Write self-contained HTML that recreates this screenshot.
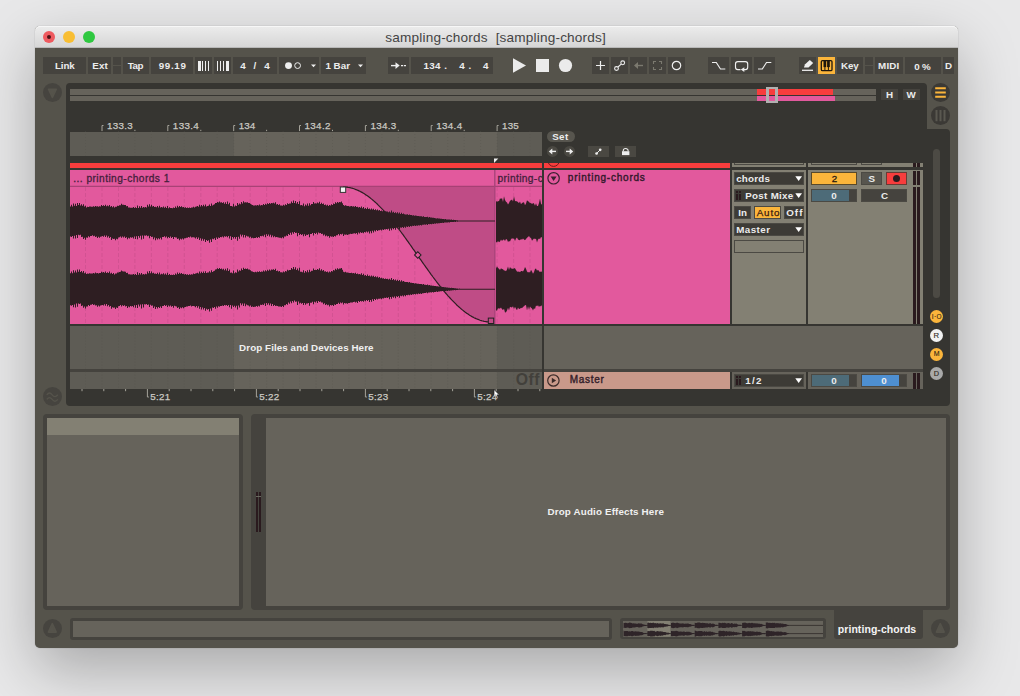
<!DOCTYPE html><html><head><meta charset="utf-8"><title>sampling-chords</title><style>
*{box-sizing:border-box;margin:0;padding:0}
html,body{width:1020px;height:696px;overflow:hidden}
body{background:#e8e8e9;font-family:"Liberation Sans",sans-serif;font-weight:bold;font-size:10px;color:#ececec;position:relative}
.a{position:absolute}
.t{position:absolute;white-space:pre;line-height:12px;height:12px}
#win{position:absolute;left:35px;top:26px;width:923px;height:622px;background:#55534b;border-radius:5px;box-shadow:0 22px 60px rgba(0,0,0,.28),0 0 1px rgba(0,0,0,.4)}
#title{position:absolute;left:0;top:0;width:923px;height:22px;background:linear-gradient(#ececec,#d6d6d6);border-radius:5px 5px 0 0;border-bottom:1px solid #b8b8b8;box-shadow:inset 0 1px 0 #f7f7f7}
.tl{position:absolute;top:5px;width:12px;height:12px;border-radius:50%}
.b{position:absolute;background:#45433e;height:17px;top:57px}
.dd{position:absolute;background:#3d3b36;border:1px solid #4b4943;height:13px}
.dd i{position:absolute;right:1px;top:3.500px;width:0;height:0;border-left:3.400px solid transparent;border-right:3.400px solid transparent;border-top:5px solid #fff}
.vb{position:absolute;height:13px;border:1px solid #4b4943}
.circ{position:absolute;width:19px;height:19px;border-radius:50%;background:#46443f}
.sc{position:absolute;width:13px;height:13px;border-radius:50%}
</style></head><body><div id="win"><div id="title"><div class="tl" style="left:8px;background:#ee5a5f"><div class="a" style="left:4px;top:4px;width:4px;height:4px;border-radius:50%;background:#4a1216"></div></div><div class="tl" style="left:28px;background:#f8be33"></div><div class="tl" style="left:48px;background:#2fc840"></div></div></div>
<div class="t" style="left:385.3px;top:30px;font-size:13.6px;line-height:15px;height:15px;letter-spacing:0.18px;font-weight:normal;color:#444;">sampling-chords  [sampling-chords]</div>
<div class="b" style="left:43px;width:43px;"></div>
<div class="t" style="left:54.9px;top:60px;font-size:9.8px;line-height:11px;height:11px;letter-spacing:-0.08px;">Link</div>
<div class="b" style="left:88px;width:23px;"></div>
<div class="t" style="left:92.2px;top:60px;font-size:9.8px;line-height:11px;height:11px;letter-spacing:0.17px;">Ext</div>
<div class="a" style="left:113px;top:57px;width:8px;height:8px;background:#45433e;"></div>
<div class="a" style="left:113px;top:66px;width:8px;height:8px;background:#45433e;"></div>
<div class="a" style="left:865px;top:57px;width:8px;height:8px;background:#45433e;"></div>
<div class="a" style="left:865px;top:66px;width:8px;height:8px;background:#45433e;"></div>
<div class="b" style="left:123px;width:26px;"></div>
<div class="t" style="left:127.8px;top:60px;font-size:9.8px;line-height:11px;height:11px;letter-spacing:-0.5px;">Tap</div>
<div class="b" style="left:151px;width:42px;"></div>
<div class="t" style="left:158.7px;top:60px;font-size:9.8px;line-height:11px;height:11px;letter-spacing:0.67px;">99.19</div>
<div class="b" style="left:195px;width:17px;"><div class="a" style="left:3px;top:3.500px;width:2.6px;height:10px;background:#eee"></div><div class="a" style="left:7px;top:3.500px;width:1.3px;height:10px;background:#eee"></div><div class="a" style="left:10.2px;top:3.500px;width:1px;height:10px;background:#eee"></div><div class="a" style="left:13px;top:3.500px;width:0.8px;height:10px;background:#eee"></div></div>
<div class="b" style="left:214px;width:17px;"><div class="a" style="left:3px;top:3.500px;width:0.8px;height:10px;background:#eee"></div><div class="a" style="left:5.8px;top:3.500px;width:1px;height:10px;background:#eee"></div><div class="a" style="left:8.6px;top:3.500px;width:1.4px;height:10px;background:#eee"></div><div class="a" style="left:11.6px;top:3.500px;width:3px;height:10px;background:#eee"></div></div>
<div class="b" style="left:233px;width:44px;"></div>
<div class="t" style="left:240.2px;top:60px;font-size:9.8px;line-height:11px;height:11px;">4</div>
<div class="t" style="left:253.6px;top:60px;font-size:9.8px;line-height:11px;height:11px;">/</div>
<div class="t" style="left:264.2px;top:60px;font-size:9.8px;line-height:11px;height:11px;">4</div>
<div class="b" style="left:279px;width:40px;"><svg class="a" style="left:0px;top:0px" width="40" height="17"><circle cx="9.500" cy="8.600" r="3.450" fill="#eee"/><circle cx="18.600" cy="8.600" r="2.900" fill="none" stroke="#eee" stroke-width="1"/><path d="M32 7.500h5l-2.500 2.800z" fill="#eee"/></svg></div>
<div class="b" style="left:321px;width:45px;"><svg class="a" style="left:0px;top:0px" width="45" height="17"><path d="M37 7.500h5l-2.500 2.800z" fill="#eee"/></svg></div>
<div class="t" style="left:325.4px;top:60px;font-size:9.8px;line-height:11px;height:11px;letter-spacing:0.02px;">1 Bar</div>
<div class="b" style="left:388px;width:21px;"><svg class="a" style="left:0px;top:0px" width="21" height="17"><path d="M3 8.600h7" stroke="#eee" stroke-width="1.400"/><path d="M7.500 5.200l4.200 3.400-4.200 3.400z" fill="#eee"/><path d="M13 8.600h2.200M16 8.600h2" stroke="#eee" stroke-width="1.200"/></svg></div>
<div class="b" style="left:411px;width:82px;"></div>
<div class="t" style="left:423.5px;top:60px;font-size:9.8px;line-height:11px;height:11px;letter-spacing:0.27px;">134</div>
<div class="t" style="left:444.2px;top:60px;font-size:9.8px;line-height:11px;height:11px;">.</div>
<div class="t" style="left:459.2px;top:60px;font-size:9.8px;line-height:11px;height:11px;">4</div>
<div class="t" style="left:468.5px;top:60px;font-size:9.8px;line-height:11px;height:11px;">.</div>
<div class="t" style="left:483px;top:60px;font-size:9.8px;line-height:11px;height:11px;">4</div>
<svg class="a" style="left:510px;top:55px" width="70" height="22"><path d="M3 3.300l13 7.200-13 7.200z" fill="#ebebeb"/><rect x="26" y="4" width="13" height="13" fill="#ebebeb"/><circle cx="55.500" cy="10.500" r="6.600" fill="#ebebeb"/></svg>
<div class="b" style="left:592px;width:17px;"><svg class="a" style="left:0px;top:0px" width="17" height="17"><path d="M4 8.500h9M8.500 4v9" stroke="#eee" stroke-width="1.200"/></svg></div>
<div class="b" style="left:611px;width:17px;"><svg class="a" style="left:0px;top:0px" width="17" height="17"><path d="M7 10l3.200-2.900" stroke="#eee" stroke-width="1.100"/><circle cx="5.500" cy="11.500" r="1.900" fill="none" stroke="#eee" stroke-width="1.100"/><circle cx="11.700" cy="5.800" r="1.900" fill="none" stroke="#eee" stroke-width="1.100"/></svg></div>
<div class="b" style="left:630px;width:17px;"><svg class="a" style="left:0px;top:0px" width="17" height="17"><path d="M6 8.500h7" stroke="#7b796f" stroke-width="1.400"/><path d="M8 5l-4 3.500 4 3.500z" fill="#7b796f"/></svg></div>
<div class="b" style="left:649px;width:17px;"><svg class="a" style="left:0px;top:0px" width="17" height="17"><path d="M4.500 7v-2.500h2.500M10 4.500h2.500v2.500M12.500 10v2.500h-2.500M7 12.500h-2.500v-2.500" fill="none" stroke="#7b796f" stroke-width="1.100"/></svg></div>
<div class="b" style="left:668px;width:17px;"><svg class="a" style="left:0px;top:0px" width="17" height="17"><circle cx="8.500" cy="8.500" r="4.200" fill="none" stroke="#eee" stroke-width="1.200"/></svg></div>
<div class="b" style="left:708px;width:21px;"><svg class="a" style="left:0px;top:0px" width="21" height="17"><path d="M4 5.500h4.300l4.200 6.500h4.800" fill="none" stroke="#eee" stroke-width="1.150"/></svg></div>
<div class="b" style="left:731px;width:21px;"><svg class="a" style="left:0px;top:0px" width="21" height="17"><path d="M9.500 12.600h-2.700a2.300 2.300 0 0 1-2.300-2.300v-3.400a2.300 2.300 0 0 1 2.300-2.300h7.600a2.300 2.300 0 0 1 2.300 2.300v3.400a2.300 2.300 0 0 1-2.300 2.300h-1.500" fill="none" stroke="#eee" stroke-width="1.150"/><path d="M13.300 10.200l-3.500 2.400 3.500 2.400z" fill="#eee"/></svg></div>
<div class="b" style="left:754px;width:21px;"><svg class="a" style="left:0px;top:0px" width="21" height="17"><path d="M4 12h4.300l4.200-6.500h4.800" fill="none" stroke="#eee" stroke-width="1.150"/></svg></div>
<div class="b" style="left:799px;width:17px;"><svg class="a" style="left:0px;top:0px" width="17" height="17"><path d="M3 13.300h11" stroke="#eee" stroke-width="1.300"/><path d="M4.900 10.400l1.200-3.100 4.700-4.400 3.400 3-4.700 4.500z" fill="#eee"/></svg></div>
<div class="b" style="left:818px;width:17px;background:#fbb53b"><svg class="a" style="left:0px;top:0px" width="17" height="17"><rect x="3.300" y="3.600" width="10.700" height="10" rx="1.200" fill="none" stroke="#1e160c" stroke-width="1.300"/><path d="M6.900 9v4.600M10.400 9v4.600" stroke="#1e160c" stroke-width="1"/><rect x="5.500" y="3.600" width="2.700" height="6.500" fill="#1e160c"/><rect x="9.100" y="3.600" width="2.700" height="6.500" fill="#1e160c"/></svg></div>
<div class="b" style="left:837px;width:26px;"></div>
<div class="t" style="left:841px;top:60px;font-size:9.8px;line-height:11px;height:11px;letter-spacing:-0.09px;">Key</div>
<div class="b" style="left:875px;width:28px;"></div>
<div class="t" style="left:878.1px;top:60px;font-size:9.8px;line-height:11px;height:11px;letter-spacing:0.17px;">MIDI</div>
<div class="b" style="left:905px;width:36px;"></div>
<div class="t" style="left:914.2px;top:61px;font-size:9.8px;line-height:11px;height:11px;letter-spacing:-0.19px;">0 %</div>
<div class="b" style="left:943px;width:11px;"></div>
<div class="t" style="left:945.1px;top:60px;font-size:9.8px;line-height:11px;height:11px;">D</div>
<div class="circ" style="left:43px;top:82.500px"><svg class="a" style="left:0px;top:0px" width="19" height="19"><path d="M5.500 6.200h7.800l-3.900 8.300z" fill="#55534b" stroke="#55534b" stroke-width="1.600" stroke-linejoin="round"/></svg></div>
<div class="circ" style="left:43px;top:387px"><svg class="a" style="left:0px;top:0px" width="19" height="19"><path d="M3.800 7.800q2.700-3.600 5.400 0t5.600 0M3.800 12.400q2.700-3.600 5.400 0t5.600 0" fill="none" stroke="#55534b" stroke-width="1.400"/></svg></div>
<div class="circ" style="left:43px;top:619px"><svg class="a" style="left:0px;top:0px" width="19" height="19"><path d="M5.400 13.100h7.800l-3.900-8.400z" fill="#55534b" stroke="#55534b" stroke-width="1.600" stroke-linejoin="round"/></svg></div>
<div class="circ" style="left:930.500px;top:619px"><svg class="a" style="left:0px;top:0px" width="19" height="19"><path d="M5.400 13.100h7.800l-3.900-8.400z" fill="#55534b" stroke="#55534b" stroke-width="1.600" stroke-linejoin="round"/></svg></div>
<div class="a" style="left:66px;top:83px;width:861px;height:100px;background:#363531;border-radius:4px 4px 0 0"></div>
<div class="a" style="left:66px;top:128.5px;width:884px;height:277.5px;background:#363531;border-radius:0 4px 4px 4px"></div>
<div class="circ" style="left:931px;top:83px;background:#3b3935"><svg class="a" style="left:0px;top:0px" width="19" height="19"><path d="M4.200 5.300h10.600M4.200 9.500h10.600M4.200 13.700h10.600" stroke="#fbb53b" stroke-width="2.100"/></svg></div>
<div class="circ" style="left:931px;top:106px;background:#3b3935"><svg class="a" style="left:0px;top:0px" width="19" height="19"><path d="M5.500 4v11.200M9.500 4v11.200M13.500 4v11.200" stroke="#5a5850" stroke-width="2"/></svg></div>
<div class="a" style="left:70px;top:89px;width:806px;height:5.5px;background:#66635b;"></div>
<div class="a" style="left:70px;top:95.7px;width:806px;height:5.3px;background:#66635b;"></div>
<div class="a" style="left:756.6px;top:89px;width:76.2px;height:5.5px;background:#f73d3d;"></div>
<div class="a" style="left:756.6px;top:95.7px;width:78.4px;height:5.3px;background:#e2599d;"></div>
<div class="a" style="left:766px;top:87px;width:12px;height:16px;background:transparent;border:2px solid #b0b0b0;border-left-width:3px;border-right-width:3px"></div>
<div class="a" style="left:881px;top:89px;width:17px;height:11px;background:#45433e;"></div>
<div class="t" style="left:886px;top:89px;font-size:9.8px;line-height:11px;height:11px;">H</div>
<div class="a" style="left:903px;top:89px;width:17px;height:11px;background:#45433e;"></div>
<div class="t" style="left:906.5px;top:89px;font-size:9.8px;line-height:11px;height:11px;">W</div>
<svg class="a" style="left:66px;top:110px" width="478" height="22"><path d="M36.0 21v-5.500h1.500" fill="none" stroke="#a5a39a" stroke-width="1"/><path d="M68.9 21v-1.200" stroke="#a5a39a" stroke-width="1"/><path d="M101.8 21v-5.500h1.500" fill="none" stroke="#a5a39a" stroke-width="1"/><path d="M134.8 21v-1.200" stroke="#a5a39a" stroke-width="1"/><path d="M167.7 21v-5.500h1.500" fill="none" stroke="#a5a39a" stroke-width="1"/><path d="M200.6 21v-1.200" stroke="#a5a39a" stroke-width="1"/><path d="M233.5 21v-5.500h1.500" fill="none" stroke="#a5a39a" stroke-width="1"/><path d="M266.5 21v-1.200" stroke="#a5a39a" stroke-width="1"/><path d="M299.4 21v-5.500h1.500" fill="none" stroke="#a5a39a" stroke-width="1"/><path d="M332.3 21v-1.200" stroke="#a5a39a" stroke-width="1"/><path d="M365.2 21v-5.500h1.500" fill="none" stroke="#a5a39a" stroke-width="1"/><path d="M398.2 21v-1.200" stroke="#a5a39a" stroke-width="1"/><path d="M431.1 21v-5.500h1.500" fill="none" stroke="#a5a39a" stroke-width="1"/></svg>
<div class="t" style="left:107px;top:120px;font-size:9.8px;line-height:11px;height:11px;letter-spacing:0.27px;font-weight:normal;color:#cbc9c2;-webkit-text-stroke:.250px #cbc9c2;">133.3</div>
<div class="t" style="left:172.85px;top:120px;font-size:9.8px;line-height:11px;height:11px;letter-spacing:0.34px;font-weight:normal;color:#cbc9c2;-webkit-text-stroke:.250px #cbc9c2;">133.4</div>
<div class="t" style="left:238.7px;top:120px;font-size:9.8px;line-height:11px;height:11px;letter-spacing:0.12px;font-weight:normal;color:#cbc9c2;-webkit-text-stroke:.250px #cbc9c2;">134</div>
<div class="t" style="left:304.55px;top:120px;font-size:9.8px;line-height:11px;height:11px;letter-spacing:0.34px;font-weight:normal;color:#cbc9c2;-webkit-text-stroke:.250px #cbc9c2;">134.2</div>
<div class="t" style="left:370.4px;top:120px;font-size:9.8px;line-height:11px;height:11px;letter-spacing:0.34px;font-weight:normal;color:#cbc9c2;-webkit-text-stroke:.250px #cbc9c2;">134.3</div>
<div class="t" style="left:436.25px;top:120px;font-size:9.8px;line-height:11px;height:11px;letter-spacing:0.34px;font-weight:normal;color:#cbc9c2;-webkit-text-stroke:.250px #cbc9c2;">134.4</div>
<div class="t" style="left:502.1px;top:120px;font-size:9.8px;line-height:11px;height:11px;letter-spacing:0.12px;font-weight:normal;color:#cbc9c2;-webkit-text-stroke:.250px #cbc9c2;">135</div>
<div class="a" style="left:70px;top:131.6px;width:472px;height:24.4px;background:#5e5c55;"></div>
<div class="a" style="left:233.7px;top:131.6px;width:263.4px;height:24.4px;background:#66635b;"></div>
<div class="a" style="left:70px;top:163px;width:472px;height:4.8px;background:#f73d3d;"></div>
<div class="a" style="left:544px;top:163px;width:186px;height:4.8px;background:#f73d3d;"></div>
<div class="a" style="left:70px;top:170px;width:472px;height:154px;background:#e2599d;"></div>
<div class="a" style="left:70px;top:326px;width:853px;height:43.4px;background:#66635b;"></div>
<div class="a" style="left:70px;top:326px;width:163.7px;height:43.4px;background:#5e5c55;"></div>
<div class="a" style="left:497.1px;top:326px;width:44.9px;height:43.4px;background:#5e5c55;"></div>
<div class="a" style="left:70px;top:369.4px;width:853px;height:2.5px;background:#45433e;"></div>
<div class="a" style="left:70px;top:371.9px;width:472px;height:17px;background:#66635b;"></div>
<div class="a" style="left:70px;top:371.9px;width:163.7px;height:17px;background:#5e5c55;"></div>
<div class="a" style="left:497.1px;top:371.9px;width:44.9px;height:17px;background:#5e5c55;"></div>
<svg class="a" style="left:70px;top:131.3px" width="472" height="258"><path d="M15.5 0V24.700M15.5 194.700V238.100M15.5 240.600V257.600" stroke="#55534c" stroke-width="1" stroke-dasharray="1 2" opacity=".35"/><path d="M32.0 0V24.700M32.0 194.700V238.100M32.0 240.600V257.600" stroke="#55534c" stroke-width="1" stroke-dasharray="1 2" opacity=".35"/><path d="M48.5 0V24.700M48.5 194.700V238.100M48.5 240.600V257.600" stroke="#55534c" stroke-width="1" stroke-dasharray="1 2" opacity=".35"/><path d="M64.9 0V24.700M64.9 194.700V238.100M64.9 240.600V257.600" stroke="#55534c" stroke-width="1" stroke-dasharray="1 2" opacity=".35"/><path d="M81.4 0V24.700M81.4 194.700V238.100M81.4 240.600V257.600" stroke="#55534c" stroke-width="1" stroke-dasharray="1 2" opacity=".35"/><path d="M97.8 0V24.700M97.8 194.700V238.100M97.8 240.600V257.600" stroke="#55534c" stroke-width="1" stroke-dasharray="1 2" opacity=".35"/><path d="M114.3 0V24.700M114.3 194.700V238.100M114.3 240.600V257.600" stroke="#55534c" stroke-width="1" stroke-dasharray="1 2" opacity=".35"/><path d="M130.8 0V24.700M130.8 194.700V238.100M130.8 240.600V257.600" stroke="#55534c" stroke-width="1" stroke-dasharray="1 2" opacity=".35"/><path d="M147.2 0V24.700M147.2 194.700V238.100M147.2 240.600V257.600" stroke="#55534c" stroke-width="1" stroke-dasharray="1 2" opacity=".35"/><path d="M163.7 0V24.700M163.7 194.700V238.100M163.7 240.600V257.600" stroke="#55534c" stroke-width="1" stroke-dasharray="1 2" opacity=".35"/><path d="M180.2 0V24.700M180.2 194.700V238.100M180.2 240.600V257.600" stroke="#55534c" stroke-width="1" stroke-dasharray="1 2" opacity=".35"/><path d="M196.6 0V24.700M196.6 194.700V238.100M196.6 240.600V257.600" stroke="#55534c" stroke-width="1" stroke-dasharray="1 2" opacity=".35"/><path d="M213.1 0V24.700M213.1 194.700V238.100M213.1 240.600V257.600" stroke="#55534c" stroke-width="1" stroke-dasharray="1 2" opacity=".35"/><path d="M229.5 0V24.700M229.5 194.700V238.100M229.5 240.600V257.600" stroke="#55534c" stroke-width="1" stroke-dasharray="1 2" opacity=".35"/><path d="M246.0 0V24.700M246.0 194.700V238.100M246.0 240.600V257.600" stroke="#55534c" stroke-width="1" stroke-dasharray="1 2" opacity=".35"/><path d="M262.5 0V24.700M262.5 194.700V238.100M262.5 240.600V257.600" stroke="#55534c" stroke-width="1" stroke-dasharray="1 2" opacity=".35"/><path d="M278.9 0V24.700M278.9 194.700V238.100M278.9 240.600V257.600" stroke="#55534c" stroke-width="1" stroke-dasharray="1 2" opacity=".35"/><path d="M295.4 0V24.700M295.4 194.700V238.100M295.4 240.600V257.600" stroke="#55534c" stroke-width="1" stroke-dasharray="1 2" opacity=".35"/><path d="M311.9 0V24.700M311.9 194.700V238.100M311.9 240.600V257.600" stroke="#55534c" stroke-width="1" stroke-dasharray="1 2" opacity=".35"/><path d="M328.3 0V24.700M328.3 194.700V238.100M328.3 240.600V257.600" stroke="#55534c" stroke-width="1" stroke-dasharray="1 2" opacity=".35"/><path d="M344.8 0V24.700M344.8 194.700V238.100M344.8 240.600V257.600" stroke="#55534c" stroke-width="1" stroke-dasharray="1 2" opacity=".35"/><path d="M361.2 0V24.700M361.2 194.700V238.100M361.2 240.600V257.600" stroke="#55534c" stroke-width="1" stroke-dasharray="1 2" opacity=".35"/><path d="M377.7 0V24.700M377.7 194.700V238.100M377.7 240.600V257.600" stroke="#55534c" stroke-width="1" stroke-dasharray="1 2" opacity=".35"/><path d="M394.2 0V24.700M394.2 194.700V238.100M394.2 240.600V257.600" stroke="#55534c" stroke-width="1" stroke-dasharray="1 2" opacity=".35"/><path d="M410.6 0V24.700M410.6 194.700V238.100M410.6 240.600V257.600" stroke="#55534c" stroke-width="1" stroke-dasharray="1 2" opacity=".35"/><path d="M427.1 0V24.700M427.1 194.700V238.100M427.1 240.600V257.600" stroke="#55534c" stroke-width="1" stroke-dasharray="1 2" opacity=".35"/><path d="M443.6 0V24.700M443.6 194.700V238.100M443.6 240.600V257.600" stroke="#55534c" stroke-width="1" stroke-dasharray="1 2" opacity=".35"/><path d="M460.0 0V24.700M460.0 194.700V238.100M460.0 240.600V257.600" stroke="#55534c" stroke-width="1" stroke-dasharray="1 2" opacity=".35"/></svg>
<div class="t" style="left:239.1px;top:342px;font-size:9.8px;line-height:11px;height:11px;letter-spacing:0.08px;color:#f0f0f0;">Drop Files and Devices Here</div>
<div class="a" style="left:542px;top:131.3px;width:2px;height:257.7px;background:#363531;"></div>
<svg class="a" style="left:70px;top:170px" width="472" height="154"><path d="M15.5 17V154" stroke="#c44d88" stroke-width="1" stroke-dasharray="4 2" opacity=".5"/><path d="M32.0 17V154" stroke="#c44d88" stroke-width="1" stroke-dasharray="4 2" opacity=".5"/><path d="M48.5 17V154" stroke="#c44d88" stroke-width="1" stroke-dasharray="4 2" opacity=".5"/><path d="M64.9 17V154" stroke="#c44d88" stroke-width="1" stroke-dasharray="4 2" opacity=".5"/><path d="M81.4 17V154" stroke="#c44d88" stroke-width="1" stroke-dasharray="4 2" opacity=".5"/><path d="M97.8 17V154" stroke="#c44d88" stroke-width="1" stroke-dasharray="4 2" opacity=".5"/><path d="M114.3 17V154" stroke="#c44d88" stroke-width="1" stroke-dasharray="4 2" opacity=".5"/><path d="M130.8 17V154" stroke="#c44d88" stroke-width="1" stroke-dasharray="4 2" opacity=".5"/><path d="M147.2 17V154" stroke="#c44d88" stroke-width="1" stroke-dasharray="4 2" opacity=".5"/><path d="M163.7 17V154" stroke="#c44d88" stroke-width="1" stroke-dasharray="4 2" opacity=".5"/><path d="M180.2 17V154" stroke="#c44d88" stroke-width="1" stroke-dasharray="4 2" opacity=".5"/><path d="M196.6 17V154" stroke="#c44d88" stroke-width="1" stroke-dasharray="4 2" opacity=".5"/><path d="M213.1 17V154" stroke="#c44d88" stroke-width="1" stroke-dasharray="4 2" opacity=".5"/><path d="M229.5 17V154" stroke="#c44d88" stroke-width="1" stroke-dasharray="4 2" opacity=".5"/><path d="M246.0 17V154" stroke="#c44d88" stroke-width="1" stroke-dasharray="4 2" opacity=".5"/><path d="M262.5 17V154" stroke="#c44d88" stroke-width="1" stroke-dasharray="4 2" opacity=".5"/><path d="M278.9 17V154" stroke="#c44d88" stroke-width="1" stroke-dasharray="4 2" opacity=".5"/><path d="M295.4 17V154" stroke="#c44d88" stroke-width="1" stroke-dasharray="4 2" opacity=".5"/><path d="M311.9 17V154" stroke="#c44d88" stroke-width="1" stroke-dasharray="4 2" opacity=".5"/><path d="M328.3 17V154" stroke="#c44d88" stroke-width="1" stroke-dasharray="4 2" opacity=".5"/><path d="M344.8 17V154" stroke="#c44d88" stroke-width="1" stroke-dasharray="4 2" opacity=".5"/><path d="M361.2 17V154" stroke="#c44d88" stroke-width="1" stroke-dasharray="4 2" opacity=".5"/><path d="M377.7 17V154" stroke="#c44d88" stroke-width="1" stroke-dasharray="4 2" opacity=".5"/><path d="M394.2 17V154" stroke="#c44d88" stroke-width="1" stroke-dasharray="4 2" opacity=".5"/><path d="M410.6 17V154" stroke="#c44d88" stroke-width="1" stroke-dasharray="4 2" opacity=".5"/><path d="M427.1 17V154" stroke="#c44d88" stroke-width="1" stroke-dasharray="4 2" opacity=".5"/><path d="M443.6 17V154" stroke="#c44d88" stroke-width="1" stroke-dasharray="4 2" opacity=".5"/><path d="M460.0 17V154" stroke="#c44d88" stroke-width="1" stroke-dasharray="4 2" opacity=".5"/><path d="M273.0 17.0L274.0 17.0L275.0 17.1L276.0 17.1L277.0 17.2L278.0 17.4L279.0 17.5L280.0 17.7L281.0 18.0L282.0 18.2L283.0 18.5L284.0 18.8L285.0 19.2L286.0 19.6L287.0 20.0L288.0 20.4L289.0 20.9L290.0 21.3L291.0 21.9L292.0 22.4L293.0 23.0L294.0 23.6L295.0 24.2L296.0 24.9L297.0 25.6L298.0 26.3L299.0 27.0L300.0 27.8L301.0 28.6L302.0 29.4L303.0 30.2L304.0 31.1L305.0 32.0L306.0 32.9L307.0 33.8L308.0 34.8L309.0 35.8L310.0 36.8L311.0 37.8L312.0 38.8L313.0 39.9L314.0 41.0L315.0 42.1L316.0 43.2L317.0 44.4L318.0 45.5L319.0 46.7L320.0 47.9L321.0 49.1L322.0 50.3L323.0 51.6L324.0 52.8L325.0 54.1L326.0 55.4L327.0 56.7L328.0 58.0L329.0 59.3L330.0 60.7L331.0 62.0L332.0 63.4L333.0 64.7L334.0 66.1L335.0 67.5L336.0 68.9L337.0 70.3L338.0 71.7L339.0 73.1L340.0 74.5L341.0 75.9L342.0 77.3L343.0 78.8L344.0 80.2L345.0 81.6L346.0 83.1L347.0 84.5L348.0 85.9L349.0 87.4L350.0 88.8L351.0 90.2L352.0 91.7L353.0 93.1L354.0 94.5L355.0 95.9L356.0 97.3L357.0 98.7L358.0 100.1L359.0 101.5L360.0 102.9L361.0 104.3L362.0 105.6L363.0 107.0L364.0 108.3L365.0 109.7L366.0 111.0L367.0 112.3L368.0 113.6L369.0 114.9L370.0 116.2L371.0 117.4L372.0 118.7L373.0 119.9L374.0 121.1L375.0 122.3L376.0 123.5L377.0 124.6L378.0 125.8L379.0 126.9L380.0 128.0L381.0 129.1L382.0 130.2L383.0 131.2L384.0 132.2L385.0 133.2L386.0 134.2L387.0 135.2L388.0 136.1L389.0 137.0L390.0 137.9L391.0 138.8L392.0 139.6L393.0 140.4L394.0 141.2L395.0 142.0L396.0 142.7L397.0 143.4L398.0 144.1L399.0 144.8L400.0 145.4L401.0 146.0L402.0 146.6L403.0 147.1L404.0 147.7L405.0 148.1L406.0 148.6L407.0 149.0L408.0 149.4L409.0 149.8L410.0 150.2L411.0 150.5L412.0 150.8L413.0 151.0L414.0 151.3L415.0 151.5L416.0 151.6L417.0 151.8L418.0 151.9L419.0 151.9L420.0 152.0L421.0 152.0L424.5 152.0L424.5 16.5z" fill="#bf4c86"/><path d="M0 16.300H472" stroke="#9c3c6d" stroke-width="1"/><path d="M424.800 0V154" stroke="#a8447a" stroke-width="1.400"/><path d="M0 36.6V36.6h1V34.8h1V36.6h1V33.5h1V35.8h1V33.8h1V35.9h1V32.9h1V35.1h1V32.9h1V35.5h1V34.3h1V35.8h1V34.2h1V36.5h1V35.8h1V37.4h1V36.7h1V36.9h1V36.5h1V36.6h1V36.7h1V36.8h1V36.3h1V36.7h1V35.9h1V36.6h1V36.3h1V36.8h1V36.3h1V36.4h1V35.0h1V36.0h1V35.2h1V36.0h1V34.8h1V36.2h1V35.6h1V36.2h1V34.9h1V36.7h1V36.1h1V37.3h1V36.2h1V37.6h1V36.8h1V36.8h1V35.8h1V35.9h1V35.3h1V35.2h1V33.8h1V34.7h1V34.8h1V34.9h1V35.1h1V36.3h1V36.1h1V37.4h1V37.4h1V37.8h1V37.8h1V37.7h1V37.1h1V38.0h1V37.3h1V38.1h1V35.5h1V38.0h1V36.3h1V37.8h1V36.1h1V37.7h1V37.1h1V37.6h1V36.9h1V37.5h1V34.7h1V36.5h1V34.2h1V36.6h1V34.7h1V36.5h1V36.1h1V36.9h1V36.7h1V37.3h1V36.0h1V37.6h1V35.7h1V37.6h1V37.0h1V37.4h1V36.4h1V37.8h1V36.8h1V37.9h1V36.0h1V38.2h1V37.2h1V38.1h1V37.9h1V38.2h1V37.6h1V38.0h1V36.6h1V37.8h1V35.8h1V37.2h1V36.0h1V37.0h1V36.2h1V37.2h1V37.0h1V37.7h1V37.2h1V37.9h1V37.4h1V38.1h1V37.4h1V37.9h1V37.5h1V37.6h1V36.8h1V37.4h1V36.8h1V36.6h1V36.1h1V36.7h1V34.8h1V36.5h1V35.0h1V36.3h1V34.7h1V36.3h1V34.6h1V36.4h1V35.9h1V35.8h1V34.5h1V35.9h1V33.6h1V35.4h1V34.7h1V34.2h1V33.0h1V32.9h1V31.9h1V32.5h1V31.6h1V32.6h1V32.2h1V32.9h1V32.3h1V33.7h1V32.3h1V33.9h1V31.6h1V34.3h1V32.8h1V36.1h1V35.9h1V36.6h1V33.7h1V36.5h1V35.5h1V36.0h1V32.9h1V34.8h1V33.6h1V34.2h1V32.1h1V33.6h1V31.2h1V32.5h1V32.2h1V32.5h1V32.2h1V33.0h1V32.9h1V33.8h1V34.6h1V34.9h1V35.4h1V35.6h1V35.2h1V35.5h1V35.0h1V35.5h1V34.5h1V35.5h1V34.9h1V35.2h1V33.9h1V35.0h1V33.7h1V34.6h1V33.3h1V34.1h1V33.1h1V33.8h1V33.0h1V33.2h1V32.8h1V33.4h1V32.3h1V34.4h1V33.9h1V34.9h1V34.3h1V35.5h1V35.5h1V35.8h1V34.8h1V35.6h1V34.3h1V35.1h1V33.2h1V34.0h1V33.5h1V33.4h1V31.5h1V32.9h1V30.6h1V32.9h1V30.9h1V33.4h1V31.9h1V34.0h1V31.3h1V35.2h1V35.1h1V35.5h1V33.5h1V36.2h1V34.5h1V35.6h1V33.6h1V35.7h1V33.2h1V35.2h1V34.1h1V34.1h1V31.9h1V33.5h1V33.2h1V33.4h1V32.5h1V33.2h1V31.7h1V34.1h1V32.7h1V34.1h1V33.4h1V35.0h1V34.6h1V35.4h1V34.8h1V35.9h1V34.9h1V35.6h1V34.3h1V35.0h1V33.4h1V34.0h1V32.2h1V33.3h1V31.9h1V32.7h1V32.1h1V32.2h1V31.5h1V33.3h1V35.1h1V35.7h1V35.2h1V35.8h1V35.9h1V36.1h1V36.4h1V36.2h1V35.9h1V36.6h1V36.3h1V36.8h1V36.0h1V37.1h1V36.7h1V37.5h1V37.1h1V37.8h1V36.4h1V38.2h1V36.9h1V38.7h1V38.1h1V39.0h1V37.5h1V39.1h1V38.6h1V39.4h1V38.4h1V39.5h1V38.7h1V40.0h1V39.2h1V40.2h1V39.4h1V40.6h1V39.9h1V41.0h1V40.6h1V41.2h1V41.1h1V41.7h1V41.3h1V41.6h1V41.4h1V42.2h1V41.5h1V42.4h1V40.6h1V42.6h1V41.7h1V42.9h1V42.2h1V43.3h1V42.3h1V43.5h1V42.6h1V43.9h1V42.7h1V44.1h1V43.4h1V44.3h1V44.5h1V44.4h1V44.3h1V45.0h1V44.5h1V45.1h1V45.1h1V45.4h1V45.3h1V45.8h1V45.6h1V45.8h1V46.0h1V46.1h1V46.2h1V46.3h1V46.3h1V46.7h1V46.2h1V46.9h1V46.9h1V47.1h1V46.8h1V47.5h1V47.0h1V47.6h1V47.5h1V47.8h1V47.8h1V48.1h1V48.2h1V48.4h1V48.3h1V48.5h1V48.4h1V48.8h1V48.7h1V49.0h1V49.0h1V49.2h1V49.1h1V49.4h1V49.4h1V49.6h1V49.6h1V49.7h1V49.6h1V50.0h1V49.8h1V50.1h1V50.1h1V50.3h1V50.3h1V50.5h1V50.4h1V50.5h1V50.5h1V50.5h1V50.5h1V50.5h1V50.5h1V50.5h1V50.5h1V50.5h1V50.5h1V50.5h1V50.5h1V50.5h1V50.5h1V50.5h1V50.5h1V50.5h1V50.5h1V50.5h1V50.5h1V50.5h1V50.5h1V50.5h1V50.5h1V50.5h1V50.5h1V50.5h1V50.5h1V50.5h1V50.5h1V50.5h1V50.5h1V50.5h1V50.5h1V50.5h1V51.5h-1V51.5h-1V51.5h-1V51.5h-1V51.5h-1V51.5h-1V51.5h-1V51.5h-1V51.5h-1V51.5h-1V51.5h-1V51.5h-1V51.5h-1V51.5h-1V51.5h-1V51.5h-1V51.5h-1V51.5h-1V51.5h-1V51.5h-1V51.5h-1V51.5h-1V51.5h-1V51.5h-1V51.5h-1V51.5h-1V51.5h-1V51.5h-1V51.5h-1V51.5h-1V51.5h-1V51.5h-1V51.5h-1V51.5h-1V51.5h-1V51.5h-1V51.5h-1V51.8h-1V51.6h-1V52.0h-1V51.7h-1V51.9h-1V51.9h-1V52.1h-1V52.0h-1V52.4h-1V52.2h-1V52.5h-1V52.4h-1V52.6h-1V52.6h-1V52.9h-1V52.7h-1V52.9h-1V52.9h-1V53.3h-1V53.2h-1V53.6h-1V53.3h-1V53.8h-1V53.5h-1V54.1h-1V53.7h-1V54.2h-1V53.9h-1V54.2h-1V54.1h-1V54.9h-1V54.2h-1V54.7h-1V54.5h-1V54.8h-1V54.8h-1V55.5h-1V55.0h-1V55.6h-1V55.2h-1V55.7h-1V55.4h-1V55.9h-1V55.6h-1V56.0h-1V55.8h-1V56.5h-1V56.1h-1V56.9h-1V56.3h-1V56.9h-1V56.5h-1V57.7h-1V56.7h-1V57.9h-1V56.9h-1V57.8h-1V57.4h-1V59.3h-1V57.6h-1V58.6h-1V57.7h-1V59.8h-1V58.0h-1V59.2h-1V58.2h-1V60.3h-1V58.4h-1V60.7h-1V58.8h-1V59.6h-1V59.0h-1V59.5h-1V59.3h-1V59.9h-1V59.6h-1V60.6h-1V59.8h-1V60.2h-1V60.2h-1V61.0h-1V60.1h-1V61.4h-1V60.6h-1V62.4h-1V60.7h-1V63.2h-1V61.3h-1V63.5h-1V61.4h-1V62.4h-1V61.5h-1V62.6h-1V62.0h-1V63.2h-1V62.4h-1V62.9h-1V62.3h-1V63.4h-1V62.5h-1V64.5h-1V63.0h-1V63.8h-1V63.2h-1V63.5h-1V63.8h-1V63.9h-1V63.8h-1V64.3h-1V64.4h-1V65.1h-1V64.5h-1V64.8h-1V64.4h-1V65.9h-1V63.8h-1V64.5h-1V63.9h-1V65.4h-1V64.1h-1V65.3h-1V65.2h-1V66.4h-1V65.9h-1V67.1h-1V66.4h-1V66.8h-1V66.3h-1V67.8h-1V66.1h-1V66.6h-1V65.6h-1V66.3h-1V64.5h-1V65.6h-1V63.7h-1V63.9h-1V63.0h-1V63.2h-1V62.4h-1V64.4h-1V62.7h-1V63.9h-1V63.0h-1V65.5h-1V63.1h-1V64.0h-1V64.0h-1V67.2h-1V64.3h-1V64.9h-1V64.7h-1V66.0h-1V64.3h-1V66.2h-1V64.3h-1V65.0h-1V64.0h-1V65.0h-1V62.9h-1V66.2h-1V62.7h-1V63.1h-1V62.0h-1V63.8h-1V62.3h-1V64.7h-1V62.8h-1V65.1h-1V63.9h-1V66.0h-1V65.4h-1V66.5h-1V66.5h-1V68.3h-1V67.2h-1V68.2h-1V67.7h-1V67.7h-1V67.6h-1V67.3h-1V67.0h-1V67.2h-1V66.3h-1V67.2h-1V65.4h-1V67.3h-1V64.7h-1V66.5h-1V64.5h-1V66.0h-1V64.3h-1V67.3h-1V64.8h-1V66.4h-1V65.8h-1V66.2h-1V66.1h-1V67.7h-1V66.9h-1V68.0h-1V67.2h-1V68.0h-1V67.9h-1V68.2h-1V67.7h-1V68.2h-1V66.8h-1V67.7h-1V66.6h-1V66.6h-1V65.7h-1V67.5h-1V64.9h-1V67.4h-1V64.8h-1V66.5h-1V64.6h-1V68.8h-1V66.7h-1V70.7h-1V67.0h-1V68.7h-1V67.0h-1V68.4h-1V66.9h-1V70.0h-1V66.2h-1V68.5h-1V66.1h-1V67.3h-1V66.3h-1V66.8h-1V66.3h-1V67.4h-1V66.6h-1V67.3h-1V67.1h-1V68.0h-1V67.4h-1V69.0h-1V67.6h-1V69.9h-1V68.3h-1V69.3h-1V68.7h-1V71.9h-1V69.6h-1V72.8h-1V70.3h-1V70.9h-1V70.0h-1V71.9h-1V69.3h-1V70.7h-1V68.7h-1V70.7h-1V68.2h-1V70.0h-1V67.4h-1V68.9h-1V67.3h-1V68.4h-1V67.5h-1V67.3h-1V67.2h-1V67.6h-1V66.6h-1V67.4h-1V67.1h-1V67.7h-1V67.7h-1V68.3h-1V68.3h-1V69.5h-1V68.5h-1V69.4h-1V68.7h-1V70.2h-1V68.4h-1V69.1h-1V67.6h-1V67.6h-1V67.0h-1V69.0h-1V67.1h-1V67.9h-1V66.6h-1V67.9h-1V66.9h-1V68.3h-1V66.6h-1V67.4h-1V66.3h-1V67.1h-1V67.1h-1V69.4h-1V67.7h-1V69.3h-1V68.3h-1V69.6h-1V68.3h-1V70.2h-1V67.6h-1V69.3h-1V66.8h-1V67.0h-1V66.0h-1V68.3h-1V65.8h-1V66.2h-1V65.2h-1V65.7h-1V65.5h-1V68.7h-1V65.6h-1V69.6h-1V65.7h-1V67.8h-1V65.9h-1V69.3h-1V66.2h-1V69.0h-1V66.6h-1V68.4h-1V67.2h-1V67.8h-1V67.3h-1V68.5h-1V67.8h-1V69.2h-1V67.3h-1V67.9h-1V66.5h-1V67.4h-1V66.5h-1V67.8h-1V66.4h-1V67.2h-1V67.5h-1V69.3h-1V68.7h-1V70.2h-1V68.7h-1V69.0h-1V68.4h-1V70.0h-1V67.1h-1V67.9h-1V66.2h-1V67.5h-1V65.4h-1V67.1h-1V65.4h-1V66.7h-1V66.1h-1V66.6h-1V66.7h-1V67.8h-1V66.8h-1V68.0h-1V66.4h-1V66.9h-1V65.7h-1V66.3h-1V65.2h-1V66.1h-1V66.0h-1V67.2h-1V66.3h-1V67.7h-1V67.6h-1V69.7h-1V67.7h-1V69.1h-1V66.7h-1V67.1h-1V64.8h-1V65.2h-1V64.8h-1V68.0h-1V64.9h-1V68.6h-1V65.7h-1V68.6h-1V66.1h-1V67.0h-1V66.4h-1z" fill="#2e1e22"/><path d="M0 103.3V103.3h1V101.5h1V103.3h1V100.2h1V102.5h1V100.5h1V102.5h1V99.5h1V101.7h1V99.6h1V102.1h1V101.0h1V102.5h1V100.9h1V103.2h1V102.6h1V104.1h1V103.5h1V103.7h1V103.3h1V103.4h1V103.5h1V103.5h1V103.1h1V103.4h1V102.6h1V103.3h1V103.0h1V103.5h1V103.0h1V103.1h1V101.7h1V102.6h1V101.9h1V102.7h1V101.5h1V102.9h1V102.2h1V102.9h1V101.6h1V103.4h1V102.8h1V104.1h1V102.9h1V104.4h1V103.6h1V103.6h1V102.5h1V102.6h1V101.9h1V101.8h1V100.4h1V101.3h1V101.4h1V101.6h1V101.7h1V103.0h1V102.8h1V104.2h1V104.2h1V104.6h1V104.6h1V104.5h1V103.9h1V104.8h1V104.1h1V104.9h1V102.3h1V104.8h1V103.1h1V104.6h1V102.9h1V104.5h1V103.9h1V104.4h1V103.7h1V104.3h1V101.5h1V103.3h1V100.9h1V103.3h1V101.4h1V103.2h1V102.8h1V103.7h1V103.5h1V104.1h1V102.8h1V104.3h1V102.5h1V104.4h1V103.7h1V104.2h1V103.2h1V104.5h1V103.6h1V104.7h1V102.8h1V105.0h1V104.0h1V104.9h1V104.8h1V105.0h1V104.4h1V104.9h1V103.4h1V104.6h1V102.6h1V104.0h1V102.8h1V103.7h1V103.0h1V103.9h1V103.8h1V104.4h1V104.0h1V104.7h1V104.2h1V104.9h1V104.2h1V104.7h1V104.3h1V104.4h1V103.5h1V104.1h1V103.6h1V103.3h1V102.8h1V103.4h1V101.5h1V103.2h1V101.7h1V103.0h1V101.4h1V103.0h1V101.2h1V103.0h1V102.5h1V102.5h1V101.2h1V102.5h1V100.3h1V102.0h1V101.3h1V100.8h1V99.5h1V99.3h1V98.3h1V99.0h1V98.0h1V99.0h1V98.6h1V99.4h1V98.8h1V100.2h1V98.8h1V100.4h1V98.2h1V100.9h1V99.5h1V102.7h1V102.6h1V103.3h1V100.5h1V103.2h1V102.2h1V102.7h1V99.6h1V101.4h1V100.2h1V100.7h1V98.6h1V100.1h1V97.7h1V99.0h1V98.6h1V98.9h1V98.6h1V99.5h1V99.4h1V100.3h1V101.2h1V101.5h1V102.1h1V102.2h1V101.8h1V102.2h1V101.6h1V102.1h1V101.2h1V102.1h1V101.5h1V101.8h1V100.6h1V101.6h1V100.3h1V101.2h1V99.8h1V100.7h1V99.6h1V100.4h1V99.5h1V99.7h1V99.3h1V99.9h1V98.8h1V101.0h1V100.5h1V101.4h1V100.9h1V102.2h1V102.2h1V102.4h1V101.4h1V102.2h1V100.9h1V101.6h1V99.8h1V100.5h1V100.0h1V99.9h1V98.0h1V99.3h1V97.0h1V99.3h1V97.3h1V99.9h1V98.4h1V100.5h1V97.8h1V101.8h1V101.7h1V102.2h1V100.2h1V102.8h1V101.1h1V102.3h1V100.3h1V102.3h1V99.8h1V101.8h1V100.7h1V100.7h1V98.4h1V100.1h1V99.7h1V99.9h1V99.0h1V99.7h1V98.2h1V100.6h1V99.2h1V100.7h1V100.0h1V101.6h1V101.2h1V102.1h1V101.5h1V102.5h1V101.6h1V102.3h1V100.9h1V101.6h1V100.0h1V100.5h1V98.7h1V99.8h1V98.3h1V99.2h1V98.5h1V98.6h1V98.0h1V99.7h1V101.7h1V102.3h1V101.8h1V102.4h1V102.5h1V102.8h1V103.1h1V102.9h1V102.7h1V103.3h1V103.1h1V103.6h1V102.8h1V103.9h1V103.5h1V104.3h1V104.0h1V104.6h1V103.3h1V105.1h1V103.8h1V105.6h1V105.0h1V105.9h1V104.5h1V106.1h1V105.6h1V106.5h1V105.5h1V106.6h1V105.8h1V107.1h1V106.3h1V107.3h1V106.6h1V107.8h1V107.1h1V108.2h1V107.8h1V108.4h1V108.3h1V108.9h1V108.6h1V108.9h1V108.7h1V109.6h1V108.8h1V109.7h1V108.0h1V110.0h1V109.1h1V110.3h1V109.6h1V110.7h1V109.7h1V110.9h1V110.1h1V111.4h1V110.2h1V111.6h1V110.9h1V111.8h1V112.1h1V112.0h1V111.9h1V112.6h1V112.1h1V112.8h1V112.8h1V113.1h1V112.9h1V113.4h1V113.3h1V113.6h1V113.7h1V113.8h1V113.9h1V114.1h1V114.1h1V114.4h1V114.0h1V114.7h1V114.7h1V114.9h1V114.6h1V115.3h1V114.9h1V115.5h1V115.4h1V115.7h1V115.8h1V116.0h1V116.1h1V116.3h1V116.3h1V116.5h1V116.5h1V116.8h1V116.7h1V117.0h1V117.1h1V117.3h1V117.2h1V117.5h1V117.5h1V117.7h1V117.7h1V117.9h1V117.8h1V118.1h1V118.0h1V118.3h1V118.3h1V118.5h1V118.5h1V118.7h1V118.6h1V118.8h1V118.8h1V118.8h1V118.8h1V118.8h1V118.8h1V118.8h1V118.8h1V118.8h1V118.8h1V118.8h1V118.8h1V118.8h1V118.8h1V118.8h1V118.8h1V118.8h1V118.8h1V118.8h1V118.8h1V118.8h1V118.8h1V118.8h1V118.8h1V118.8h1V118.8h1V118.8h1V118.8h1V118.8h1V118.8h1V118.8h1V118.8h1V118.8h1V118.8h1V118.8h1V119.8h-1V119.8h-1V119.8h-1V119.8h-1V119.8h-1V119.8h-1V119.8h-1V119.8h-1V119.8h-1V119.8h-1V119.8h-1V119.8h-1V119.8h-1V119.8h-1V119.8h-1V119.8h-1V119.8h-1V119.8h-1V119.8h-1V119.8h-1V119.8h-1V119.8h-1V119.8h-1V119.8h-1V119.8h-1V119.8h-1V119.8h-1V119.8h-1V119.8h-1V119.8h-1V119.8h-1V119.8h-1V119.8h-1V119.8h-1V119.8h-1V119.8h-1V119.8h-1V120.1h-1V119.9h-1V120.3h-1V120.1h-1V120.2h-1V120.2h-1V120.4h-1V120.4h-1V120.7h-1V120.5h-1V120.9h-1V120.8h-1V120.9h-1V120.9h-1V121.2h-1V121.1h-1V121.3h-1V121.3h-1V121.6h-1V121.5h-1V122.0h-1V121.6h-1V122.1h-1V121.9h-1V122.5h-1V122.1h-1V122.6h-1V122.3h-1V122.6h-1V122.5h-1V123.3h-1V122.6h-1V123.1h-1V122.9h-1V123.2h-1V123.2h-1V123.9h-1V123.4h-1V124.0h-1V123.6h-1V124.2h-1V123.8h-1V124.4h-1V124.0h-1V124.5h-1V124.3h-1V124.9h-1V124.5h-1V125.3h-1V124.7h-1V125.3h-1V125.0h-1V126.2h-1V125.2h-1V126.4h-1V125.4h-1V126.3h-1V125.8h-1V127.8h-1V126.1h-1V127.1h-1V126.2h-1V128.3h-1V126.5h-1V127.7h-1V126.7h-1V128.8h-1V126.9h-1V129.2h-1V127.3h-1V128.1h-1V127.6h-1V128.0h-1V127.8h-1V128.4h-1V128.2h-1V129.2h-1V128.4h-1V128.8h-1V128.8h-1V129.6h-1V128.7h-1V130.0h-1V129.1h-1V131.0h-1V129.3h-1V131.8h-1V129.9h-1V132.1h-1V130.0h-1V131.0h-1V130.1h-1V131.2h-1V130.6h-1V131.8h-1V131.0h-1V131.5h-1V130.9h-1V132.0h-1V131.1h-1V133.1h-1V131.7h-1V132.4h-1V131.8h-1V132.1h-1V132.5h-1V132.5h-1V132.5h-1V133.0h-1V133.1h-1V133.7h-1V133.2h-1V133.5h-1V133.1h-1V134.6h-1V132.5h-1V133.2h-1V132.6h-1V134.1h-1V132.8h-1V134.0h-1V133.9h-1V135.1h-1V134.6h-1V135.9h-1V135.1h-1V135.6h-1V135.1h-1V136.6h-1V134.8h-1V135.3h-1V134.3h-1V135.0h-1V133.2h-1V134.3h-1V132.4h-1V132.5h-1V131.6h-1V131.9h-1V131.1h-1V133.0h-1V131.3h-1V132.6h-1V131.7h-1V134.2h-1V131.7h-1V132.7h-1V132.7h-1V135.8h-1V133.0h-1V133.6h-1V133.4h-1V134.7h-1V133.0h-1V134.9h-1V133.0h-1V133.7h-1V132.7h-1V133.6h-1V131.6h-1V134.9h-1V131.4h-1V131.7h-1V130.6h-1V132.4h-1V131.0h-1V133.3h-1V131.4h-1V133.8h-1V132.6h-1V134.7h-1V134.1h-1V135.3h-1V135.3h-1V137.0h-1V136.0h-1V137.0h-1V136.5h-1V136.5h-1V136.4h-1V136.1h-1V135.7h-1V136.0h-1V135.0h-1V136.0h-1V134.1h-1V136.0h-1V133.4h-1V135.2h-1V133.2h-1V134.7h-1V133.0h-1V136.0h-1V133.6h-1V135.1h-1V134.5h-1V134.9h-1V134.8h-1V136.5h-1V135.7h-1V136.7h-1V136.0h-1V136.8h-1V136.7h-1V137.0h-1V136.5h-1V137.0h-1V135.6h-1V136.4h-1V135.4h-1V135.3h-1V134.4h-1V136.2h-1V133.6h-1V136.1h-1V133.5h-1V135.2h-1V133.3h-1V137.5h-1V135.5h-1V139.4h-1V135.8h-1V137.4h-1V135.7h-1V137.1h-1V135.6h-1V138.8h-1V135.0h-1V137.2h-1V134.9h-1V136.1h-1V135.1h-1V135.6h-1V135.1h-1V136.1h-1V135.4h-1V136.0h-1V135.9h-1V136.8h-1V136.2h-1V137.8h-1V136.4h-1V138.7h-1V137.1h-1V138.1h-1V137.5h-1V140.8h-1V138.4h-1V141.6h-1V139.1h-1V139.7h-1V138.8h-1V140.8h-1V138.1h-1V139.5h-1V137.5h-1V139.5h-1V136.9h-1V138.8h-1V136.2h-1V137.7h-1V136.1h-1V137.2h-1V136.2h-1V136.1h-1V136.0h-1V136.4h-1V135.4h-1V136.1h-1V135.9h-1V136.4h-1V136.5h-1V137.1h-1V137.2h-1V138.3h-1V137.3h-1V138.3h-1V137.6h-1V139.0h-1V137.2h-1V137.9h-1V136.4h-1V136.3h-1V135.8h-1V137.8h-1V135.9h-1V136.7h-1V135.4h-1V136.6h-1V135.6h-1V137.1h-1V135.3h-1V136.1h-1V135.0h-1V135.9h-1V135.9h-1V138.1h-1V136.4h-1V138.1h-1V137.1h-1V138.4h-1V137.1h-1V139.0h-1V136.4h-1V138.1h-1V135.5h-1V135.7h-1V134.7h-1V137.0h-1V134.6h-1V134.9h-1V133.9h-1V134.4h-1V134.2h-1V137.4h-1V134.3h-1V138.4h-1V134.4h-1V136.6h-1V134.6h-1V138.0h-1V134.9h-1V137.8h-1V135.3h-1V137.2h-1V136.0h-1V136.6h-1V136.1h-1V137.2h-1V136.6h-1V138.0h-1V136.1h-1V136.6h-1V135.3h-1V136.1h-1V135.2h-1V136.6h-1V135.1h-1V136.0h-1V136.3h-1V138.1h-1V137.5h-1V139.0h-1V137.5h-1V137.8h-1V137.2h-1V138.8h-1V135.9h-1V136.7h-1V135.0h-1V136.2h-1V134.1h-1V135.8h-1V134.2h-1V135.4h-1V134.9h-1V135.3h-1V135.5h-1V136.6h-1V135.6h-1V136.8h-1V135.2h-1V135.6h-1V134.5h-1V135.0h-1V133.9h-1V134.8h-1V134.8h-1V135.9h-1V135.0h-1V136.5h-1V136.4h-1V138.5h-1V136.4h-1V137.8h-1V135.5h-1V135.9h-1V133.5h-1V133.9h-1V133.5h-1V136.7h-1V133.6h-1V137.4h-1V134.4h-1V137.3h-1V134.9h-1V135.8h-1V135.2h-1z" fill="#2e1e22"/><path d="M426.0 30.8L427.0 32.1L428.0 30.9L429.0 31.2L430.0 28.2L431.0 29.1L432.0 28.1L433.0 31.9L434.0 26.3L435.0 29.9L436.0 31.7L437.0 32.6L438.0 34.4L439.0 33.1L440.0 30.8L441.0 30.3L442.0 29.5L443.0 31.4L444.0 26.2L445.0 31.1L446.0 31.3L447.0 31.3L448.0 32.2L449.0 33.0L450.0 31.5L451.0 34.2L452.0 32.9L453.0 32.5L454.0 32.3L455.0 35.3L456.0 33.5L457.0 30.2L458.0 31.2L459.0 31.7L460.0 33.2L461.0 32.7L462.0 34.2L463.0 33.1L464.0 33.5L465.0 35.7L466.0 33.3L467.0 36.0L468.0 36.0L469.0 32.9L470.0 28.5L471.0 33.8L472.0 34.8L472.0 34.8L472.0 67.6L472.0 67.6L471.0 66.9L470.0 69.0L469.0 68.5L468.0 69.4L467.0 72.4L466.0 68.8L465.0 69.1L464.0 68.5L463.0 69.4L462.0 70.7L461.0 68.0L460.0 67.6L459.0 66.1L458.0 66.9L457.0 67.7L456.0 69.0L455.0 70.2L454.0 69.6L453.0 68.4L452.0 69.8L451.0 69.1L450.0 70.3L449.0 70.1L448.0 69.4L447.0 67.5L446.0 68.6L445.0 70.9L444.0 68.6L443.0 68.8L442.0 68.3L441.0 69.2L440.0 71.5L439.0 71.1L438.0 71.9L437.0 69.5L436.0 68.9L435.0 70.9L434.0 69.5L433.0 69.7L432.0 70.9L431.0 69.4L430.0 71.5L429.0 72.2L428.0 71.1L427.0 72.6L426.0 71.9z" fill="#2e1e22"/><path d="M426.0 98.4L427.0 96.3L428.0 98.0L429.0 98.7L430.0 100.0L431.0 98.3L432.0 99.1L433.0 99.2L434.0 100.6L435.0 100.5L436.0 101.2L437.0 99.6L438.0 96.5L439.0 100.0L440.0 97.0L441.0 98.6L442.0 98.5L443.0 99.0L444.0 98.3L445.0 98.3L446.0 99.9L447.0 101.6L448.0 101.8L449.0 101.5L450.0 102.2L451.0 101.0L452.0 101.0L453.0 101.6L454.0 99.7L455.0 97.0L456.0 98.8L457.0 101.5L458.0 102.4L459.0 102.1L460.0 102.4L461.0 99.7L462.0 101.4L463.0 103.8L464.0 101.9L465.0 99.0L466.0 98.6L467.0 100.7L468.0 99.8L469.0 101.0L470.0 102.3L471.0 101.2L472.0 102.1L472.0 102.1L472.0 134.9L472.0 134.9L471.0 136.6L470.0 135.7L469.0 137.0L468.0 135.2L467.0 136.2L466.0 135.5L465.0 138.9L464.0 138.2L463.0 140.5L462.0 138.6L461.0 137.8L460.0 136.5L459.0 139.8L458.0 136.3L457.0 140.4L456.0 135.0L455.0 135.3L454.0 136.3L453.0 137.0L452.0 138.2L451.0 137.8L450.0 138.7L449.0 139.0L448.0 137.6L447.0 140.2L446.0 138.7L445.0 136.8L444.0 139.0L443.0 136.2L442.0 137.5L441.0 137.3L440.0 136.8L439.0 140.6L438.0 137.7L437.0 140.6L436.0 142.2L435.0 142.5L434.0 138.7L433.0 140.1L432.0 139.2L431.0 137.5L430.0 138.6L429.0 138.6L428.0 138.2L427.0 140.4L426.0 140.4z" fill="#2e1e22"/><path d="M273.0 17.0L274.0 17.0L275.0 17.1L276.0 17.1L277.0 17.2L278.0 17.4L279.0 17.5L280.0 17.7L281.0 18.0L282.0 18.2L283.0 18.5L284.0 18.8L285.0 19.2L286.0 19.6L287.0 20.0L288.0 20.4L289.0 20.9L290.0 21.3L291.0 21.9L292.0 22.4L293.0 23.0L294.0 23.6L295.0 24.2L296.0 24.9L297.0 25.6L298.0 26.3L299.0 27.0L300.0 27.8L301.0 28.6L302.0 29.4L303.0 30.2L304.0 31.1L305.0 32.0L306.0 32.9L307.0 33.8L308.0 34.8L309.0 35.8L310.0 36.8L311.0 37.8L312.0 38.8L313.0 39.9L314.0 41.0L315.0 42.1L316.0 43.2L317.0 44.4L318.0 45.5L319.0 46.7L320.0 47.9L321.0 49.1L322.0 50.3L323.0 51.6L324.0 52.8L325.0 54.1L326.0 55.4L327.0 56.7L328.0 58.0L329.0 59.3L330.0 60.7L331.0 62.0L332.0 63.4L333.0 64.7L334.0 66.1L335.0 67.5L336.0 68.9L337.0 70.3L338.0 71.7L339.0 73.1L340.0 74.5L341.0 75.9L342.0 77.3L343.0 78.8L344.0 80.2L345.0 81.6L346.0 83.1L347.0 84.5L348.0 85.9L349.0 87.4L350.0 88.8L351.0 90.2L352.0 91.7L353.0 93.1L354.0 94.5L355.0 95.9L356.0 97.3L357.0 98.7L358.0 100.1L359.0 101.5L360.0 102.9L361.0 104.3L362.0 105.6L363.0 107.0L364.0 108.3L365.0 109.7L366.0 111.0L367.0 112.3L368.0 113.6L369.0 114.9L370.0 116.2L371.0 117.4L372.0 118.7L373.0 119.9L374.0 121.1L375.0 122.3L376.0 123.5L377.0 124.6L378.0 125.8L379.0 126.9L380.0 128.0L381.0 129.1L382.0 130.2L383.0 131.2L384.0 132.2L385.0 133.2L386.0 134.2L387.0 135.2L388.0 136.1L389.0 137.0L390.0 137.9L391.0 138.8L392.0 139.6L393.0 140.4L394.0 141.2L395.0 142.0L396.0 142.7L397.0 143.4L398.0 144.1L399.0 144.8L400.0 145.4L401.0 146.0L402.0 146.6L403.0 147.1L404.0 147.7L405.0 148.1L406.0 148.6L407.0 149.0L408.0 149.4L409.0 149.8L410.0 150.2L411.0 150.5L412.0 150.8L413.0 151.0L414.0 151.3L415.0 151.5L416.0 151.6L417.0 151.8L418.0 151.9L419.0 151.9L420.0 152.0L421.0 152.0" fill="none" stroke="#2e1e22" stroke-width="1.200"/><rect x="270.3" y="16.99999999999999" width="5.400" height="5.400" fill="#f4f4f4" stroke="#333" stroke-width="1"/><rect x="418.3" y="148.10000000000002" width="5.400" height="5.400" fill="#bf4c86" stroke="#222" stroke-width="1"/><rect x="345.5" y="82.7" width="4.600" height="4.600" transform="rotate(45 347.8 85)" fill="#e2599d" stroke="#222" stroke-width="1"/></svg>
<div class="t" style="left:73.3px;top:173px;font-size:10.2px;line-height:11px;height:11px;letter-spacing:0.44px;font-weight:normal;color:#45203c;-webkit-text-stroke:.300px #45203c;">... printing-chords 1</div>
<div class="a" style="left:496px;top:173px;width:46px;height:11px;overflow:hidden"><div class="t" style="left:1.500px;top:0;font-size:10.200px;line-height:11px;font-weight:normal;letter-spacing:.370px;color:#45203c;-webkit-text-stroke:.300px #45203c">printing-chords</div></div>
<svg class="a" style="left:491px;top:157.3px" width="8" height="8"><path d="M3 1.500h4.300L3 6z" fill="#eee"/></svg>
<svg class="a" style="left:493px;top:389px" width="8" height="10"><path d="M1 0.500v7.500l1.800-1.600 1.300 2.800 1.200-.6-1.300-2.700h2.400z" fill="#fff" stroke="#222" stroke-width=".700"/></svg>
<svg class="a" style="left:66px;top:388.9px" width="478" height="16"><path d="M16.0 0v2.200" stroke="#a5a39a" stroke-width="1"/><path d="M37.8 0v2.200" stroke="#a5a39a" stroke-width="1"/><path d="M59.6 0v2.200" stroke="#a5a39a" stroke-width="1"/><path d="M81.4 0v8h1.500" fill="none" stroke="#a5a39a" stroke-width="1"/><path d="M103.2 0v2.200" stroke="#a5a39a" stroke-width="1"/><path d="M125.0 0v2.200" stroke="#a5a39a" stroke-width="1"/><path d="M146.8 0v2.200" stroke="#a5a39a" stroke-width="1"/><path d="M168.6 0v2.200" stroke="#a5a39a" stroke-width="1"/><path d="M190.4 0v8h1.500" fill="none" stroke="#a5a39a" stroke-width="1"/><path d="M212.2 0v2.200" stroke="#a5a39a" stroke-width="1"/><path d="M234.0 0v2.200" stroke="#a5a39a" stroke-width="1"/><path d="M255.8 0v2.200" stroke="#a5a39a" stroke-width="1"/><path d="M277.6 0v2.200" stroke="#a5a39a" stroke-width="1"/><path d="M299.4 0v8h1.500" fill="none" stroke="#a5a39a" stroke-width="1"/><path d="M321.2 0v2.200" stroke="#a5a39a" stroke-width="1"/><path d="M343.0 0v2.200" stroke="#a5a39a" stroke-width="1"/><path d="M364.8 0v2.200" stroke="#a5a39a" stroke-width="1"/><path d="M386.6 0v2.200" stroke="#a5a39a" stroke-width="1"/><path d="M408.4 0v8h1.500" fill="none" stroke="#a5a39a" stroke-width="1"/><path d="M430.2 0v2.200" stroke="#a5a39a" stroke-width="1"/><path d="M452.0 0v2.200" stroke="#a5a39a" stroke-width="1"/><path d="M473.8 0v2.200" stroke="#a5a39a" stroke-width="1"/></svg>
<div class="t" style="left:150.2px;top:391px;font-size:9.8px;line-height:11px;height:11px;letter-spacing:0.34px;font-weight:normal;color:#cbc9c2;-webkit-text-stroke:.250px #cbc9c2;">5:21</div>
<div class="t" style="left:259.2px;top:391px;font-size:9.8px;line-height:11px;height:11px;letter-spacing:0.34px;font-weight:normal;color:#cbc9c2;-webkit-text-stroke:.250px #cbc9c2;">5:22</div>
<div class="t" style="left:368.2px;top:391px;font-size:9.8px;line-height:11px;height:11px;letter-spacing:0.34px;font-weight:normal;color:#cbc9c2;-webkit-text-stroke:.250px #cbc9c2;">5:23</div>
<div class="t" style="left:477.2px;top:391px;font-size:9.8px;line-height:11px;height:11px;letter-spacing:0.34px;font-weight:normal;color:#cbc9c2;-webkit-text-stroke:.250px #cbc9c2;">5:24</div>
<div class="t" style="left:515.8px;top:371px;font-size:15.8px;line-height:17px;height:17px;letter-spacing:0.49px;color:#42403b;">Off</div>
<div class="a" style="left:547px;top:131.3px;width:27.8px;height:10.5px;background:#57554e;border-radius:5.500px"></div>
<div class="t" style="left:552.2px;top:131px;font-size:9.8px;line-height:11px;height:11px;letter-spacing:0.37px;">Set</div>
<svg class="a" style="left:546px;top:145px" width="32" height="13"><circle cx="6.500" cy="6.400" r="5.500" fill="#4a4842"/><circle cx="23.500" cy="6.400" r="5.500" fill="#4a4842"/><path d="M4.500 6.400h5.500" stroke="#eee" stroke-width="1.400"/><path d="M6.300 3.400l-3.500 3 3.500 3z" fill="#eee"/><path d="M20 6.400h5.500" stroke="#eee" stroke-width="1.400"/><path d="M23.700 3.400l3.500 3-3.500 3z" fill="#eee"/></svg>
<div class="a" style="left:588.2px;top:146px;width:20.8px;height:10.8px;background:#4a4842;"><svg class="a" style="left:0px;top:0px" width="21" height="11"><path d="M8.600 7.500l3.600-3.700" stroke="#eee" stroke-width="1"/><circle cx="8.600" cy="7.500" r="1.350" fill="#eee"/><circle cx="12.200" cy="3.800" r="1.350" fill="#eee"/></svg></div>
<div class="a" style="left:615px;top:146px;width:21px;height:10.8px;background:#4a4842;"><svg class="a" style="left:0px;top:0px" width="21" height="11"><rect x="7" y="5.200" width="7.400" height="3.900" fill="#eee"/><path d="M8.300 5.300v-.8a2.400 2 0 0 1 4.800 0v.8" fill="none" stroke="#eee" stroke-width="1.100"/></svg></div>
<div class="a" style="left:544px;top:170px;width:186px;height:154px;background:#e2599d;"></div>
<svg class="a" style="left:546px;top:171px" width="16" height="16"><circle cx="7.600" cy="7.300" r="5.700" fill="none" stroke="#3a2030" stroke-width="1.200"/><path d="M4.600 5.500h6l-3 4.600z" fill="#3a2030"/></svg>
<div class="t" style="left:567.8px;top:172px;font-size:10px;line-height:11px;height:11px;letter-spacing:0.78px;font-weight:normal;color:#35192c;-webkit-text-stroke:.400px #35192c;">printing-chords</div>
<svg class="a" style="left:546px;top:162.6px" width="16" height="5"><circle cx="7.600" cy="-2.300" r="5.700" fill="none" stroke="#6a1a1a" stroke-width="1"/></svg>
<div class="a" style="left:732px;top:162.6px;width:74.3px;height:4.9px;background:#838073;"></div>
<div class="a" style="left:732px;top:169.5px;width:74.3px;height:154.5px;background:#838073;"></div>
<div class="a" style="left:732px;top:371.9px;width:74.3px;height:17px;background:#66635b;"></div>
<div class="a" style="left:808px;top:162.6px;width:115.3px;height:4.9px;background:#838073;"></div>
<div class="a" style="left:808px;top:169.5px;width:115.3px;height:154.5px;background:#838073;"></div>
<div class="a" style="left:808px;top:371.9px;width:115.3px;height:17px;background:#66635b;"></div>
<div class="a" style="left:734px;top:162.6px;width:70px;height:2.6px;background:transparent;border:1px solid #4b4943;border-top:none"></div>
<div class="a" style="left:811px;top:162.6px;width:46px;height:2.6px;background:transparent;border:1px solid #4b4943;border-top:none"></div>
<div class="a" style="left:861px;top:162.6px;width:21px;height:2.6px;background:transparent;border:1px solid #4b4943;border-top:none"></div>
<div class="dd" style="left:734px;top:172px;width:70px"><svg class="a" style="left:60px;top:3px" width="8" height="6"><path d="M.300 .300h6.700l-3.350 4.800z" fill="#fff"/></svg></div>
<div class="t" style="left:736.2px;top:173px;font-size:9.8px;line-height:11px;height:11px;letter-spacing:0.23px;">chords</div>
<div class="dd" style="left:734px;top:189px;width:70px"><span class="a" style="left:1px;top:1px;width:2px;height:2px;background:#2a1a1e"></span><span class="a" style="left:1px;top:4px;width:2px;height:6px;background:#2a1a1e"></span><span class="a" style="left:4px;top:1px;width:2px;height:2px;background:#2a1a1e"></span><span class="a" style="left:4px;top:4px;width:2px;height:6px;background:#2a1a1e"></span><svg class="a" style="left:60px;top:3px" width="8" height="6"><path d="M.300 .300h6.700l-3.350 4.800z" fill="#fff"/></svg></div>
<div class="a" style="left:745.2px;top:190px;width:49.1px;height:11px;overflow:hidden"><div class="t" style="left:0;top:0;font-size:9.8px;line-height:11px;letter-spacing:0.3px">Post Mixer</div></div>
<div class="vb" style="left:734px;top:206px;width:17px;background:#3d3b36"></div>
<div class="t" style="left:738.3px;top:207px;font-size:9.8px;line-height:11px;height:11px;letter-spacing:0.09px;">In</div>
<div class="vb" style="left:754px;top:206px;width:27px;background:#fbb53b"></div>
<div class="t" style="left:756.7px;top:207px;font-size:9.8px;line-height:11px;height:11px;letter-spacing:0.88px;font-weight:normal;color:#3a1a10;-webkit-text-stroke:.250px #3a1a10;">Auto</div>
<div class="vb" style="left:784px;top:206px;width:20px;background:#3d3b36"></div>
<div class="t" style="left:786.2px;top:207px;font-size:9.8px;line-height:11px;height:11px;letter-spacing:1.03px;">Off</div>
<div class="dd" style="left:734px;top:223px;width:70px"><svg class="a" style="left:60px;top:3px" width="8" height="6"><path d="M.300 .300h6.700l-3.350 4.800z" fill="#fff"/></svg></div>
<div class="t" style="left:736.2px;top:224px;font-size:9.8px;line-height:11px;height:11px;letter-spacing:0.44px;">Master</div>
<div class="a" style="left:734px;top:240px;width:70px;height:13px;background:transparent;border:1px solid #4b4943"></div>
<div class="vb" style="left:811px;top:172px;width:46px;background:#fbb53b;border-color:#5a4a2a"></div>
<div class="t" style="left:831.7px;top:173px;font-size:9.8px;line-height:11px;height:11px;font-weight:normal;color:#2a1a10;-webkit-text-stroke:.300px #2a1a10;">2</div>
<div class="vb" style="left:861px;top:172px;width:21px;background:#57554e"></div>
<div class="t" style="left:868.6px;top:173px;font-size:9.8px;line-height:11px;height:11px;">S</div>
<div class="vb" style="left:886px;top:172px;width:21px;background:#f73d3d;border-color:#6a3a34"><span class="a" style="left:6px;top:2px;width:7px;height:7px;border-radius:50%;background:#2a1a1e"></span></div>
<div class="vb" style="left:811px;top:189px;width:46px;background:linear-gradient(90deg,#4d6b78 0,#4d6b78 37px,#45433e 37px)"></div>
<div class="t" style="left:831.3px;top:190px;font-size:9.8px;line-height:11px;height:11px;">0</div>
<div class="vb" style="left:861px;top:189px;width:46px;background:#45433e"></div>
<div class="t" style="left:881px;top:190px;font-size:9.8px;line-height:11px;height:11px;">C</div>
<div class="a" style="left:913.2px;top:162.6px;width:2.6px;height:4.6px;background:#2a1a1e;"></div>
<div class="a" style="left:917.1px;top:162.6px;width:2.8px;height:4.6px;background:#2a1a1e;"></div>
<div class="a" style="left:913.2px;top:170.8px;width:2.6px;height:13.8px;background:#2a1a1e;"></div>
<div class="a" style="left:917.1px;top:170.8px;width:2.8px;height:13.8px;background:#2a1a1e;"></div>
<div class="a" style="left:913.2px;top:187px;width:2.6px;height:137px;background:#2a1a1e;"></div>
<div class="a" style="left:917.1px;top:187px;width:2.8px;height:137px;background:#2a1a1e;"></div>
<div class="a" style="left:913.2px;top:373px;width:2.6px;height:16px;background:#2a1a1e;"></div>
<div class="a" style="left:917.1px;top:373px;width:2.8px;height:16px;background:#2a1a1e;"></div>
<div class="a" style="left:544px;top:371.9px;width:186px;height:17px;background:#c9998a;"></div>
<svg class="a" style="left:546px;top:372.5px" width="16" height="16"><circle cx="7.400" cy="7.500" r="5.700" fill="none" stroke="#3a2a28" stroke-width="1.200"/><path d="M5.800 4.800v5.400l4.300-2.700z" fill="#3a2a28"/></svg>
<div class="t" style="left:569.8px;top:374px;font-size:10px;line-height:11px;height:11px;letter-spacing:0.67px;font-weight:normal;color:#35212a;-webkit-text-stroke:.400px #35212a;">Master</div>
<div class="dd" style="left:734px;top:374.4px;width:70px"><span class="a" style="left:1px;top:1px;width:2px;height:2px;background:#2a1a1e"></span><span class="a" style="left:1px;top:4px;width:2px;height:6px;background:#2a1a1e"></span><span class="a" style="left:4px;top:1px;width:2px;height:2px;background:#2a1a1e"></span><span class="a" style="left:4px;top:4px;width:2px;height:6px;background:#2a1a1e"></span><svg class="a" style="left:60px;top:3px" width="8" height="6"><path d="M.300 .300h6.700l-3.350 4.800z" fill="#fff"/></svg></div>
<div class="t" style="left:745.2px;top:375px;font-size:9.8px;line-height:11px;height:11px;letter-spacing:1.34px;">1/2</div>
<div class="vb" style="left:811px;top:374.4px;width:46px;background:linear-gradient(90deg,#4d6b78 0,#4d6b78 37px,#45433e 37px)"></div>
<div class="t" style="left:831.3px;top:375px;font-size:9.8px;line-height:11px;height:11px;">0</div>
<div class="vb" style="left:861px;top:374.4px;width:46px;background:linear-gradient(90deg,#4e8fd0 0,#4e8fd0 37px,#45433e 37px)"></div>
<div class="t" style="left:881.3px;top:375px;font-size:9.8px;line-height:11px;height:11px;">0</div>
<div class="a" style="left:933px;top:149px;width:7px;height:149px;background:#4c4a44;border-radius:3.500px"></div>
<div class="sc" style="left:930.100px;top:309.9px;background:#fbb53b"></div>
<div class="t" style="left:931.75px;top:313px;font-size:6.4px;line-height:7px;height:7px;letter-spacing:0.41px;font-weight:normal;color:#2e2618;-webkit-text-stroke:.100px #2e2618;">I·O</div>
<div class="sc" style="left:930.100px;top:328.7px;background:#f2f2f2"></div>
<div class="t" style="left:934.29px;top:332px;font-size:6.4px;line-height:7px;height:7px;font-weight:normal;color:#2e2618;-webkit-text-stroke:.100px #2e2618;transform:scaleX(1.21);transform-origin:50% 50%;">R</div>
<div class="sc" style="left:930.100px;top:347.6px;background:#fbb53b"></div>
<div class="t" style="left:933.93px;top:350px;font-size:6.4px;line-height:7px;height:7px;font-weight:normal;color:#2e2618;-webkit-text-stroke:.100px #2e2618;transform:scaleX(1.09);transform-origin:50% 50%;">M</div>
<div class="sc" style="left:930.100px;top:366.9px;background:#a9a9a9"></div>
<div class="t" style="left:934.29px;top:370px;font-size:6.4px;line-height:7px;height:7px;font-weight:normal;color:#2e2618;-webkit-text-stroke:.100px #2e2618;transform:scaleX(1.15);transform-origin:50% 50%;">D</div>
<div class="a" style="left:43px;top:414px;width:200px;height:196px;background:#45433e;border-radius:4px"></div>
<div class="a" style="left:47px;top:418px;width:192px;height:188px;background:#66635b;"></div>
<div class="a" style="left:47px;top:418px;width:192px;height:17px;background:#838073;"></div>
<div class="a" style="left:251px;top:414px;width:699px;height:196px;background:#45433e;border-radius:4px"></div>
<div class="a" style="left:266px;top:418px;width:680px;height:188px;background:#66635b;"></div>
<div class="a" style="left:256px;top:491.7px;width:2px;height:40px;background:#2a1a1e;"></div>
<div class="a" style="left:259px;top:491.7px;width:2px;height:40px;background:#2a1a1e;"></div>
<div class="a" style="left:256px;top:496px;width:5px;height:1px;background:#6a6860;"></div>
<div class="t" style="left:547.5px;top:506px;font-size:9.8px;line-height:11px;height:11px;letter-spacing:0.16px;color:#f0f0f0;">Drop Audio Effects Here</div>
<div class="a" style="left:70.3px;top:618px;width:541.5px;height:21.8px;background:#45433e;border-radius:3px"></div>
<div class="a" style="left:73.4px;top:621px;width:535.6px;height:15.6px;background:#66635b;"></div>
<div class="a" style="left:619.8px;top:618px;width:206px;height:21.4px;background:#45433e;border-radius:3px"></div>
<div class="a" style="left:622.6px;top:621px;width:200.6px;height:15.7px;background:#66635b;"></div>
<div class="a" style="left:834px;top:609px;width:89px;height:30px;background:#45433e;border-radius:0 0 3px 3px"></div>
<div class="t" style="left:837.8px;top:623px;font-size:10.5px;line-height:12px;height:12px;letter-spacing:0.06px;color:#f4f4f4;">printing-chords</div>
<svg class="a" style="left:622.6px;top:621px" width="201" height="16"><rect x="24.400" y="0" width="23" height="15.700" fill="#838073"/><path d="M1 4.400H200M1 12.600H200" stroke="#2e2a28" stroke-width=".800"/><path d="M0.6 1.9L1.6 2.0L2.6 1.8L3.6 2.1L4.6 2.2L5.6 2.0L6.6 1.6L7.6 1.8L8.6 1.9L9.6 2.4L10.6 2.2L11.6 2.4L12.6 2.6L13.6 2.7L14.6 2.7L15.6 2.2L16.6 2.4L17.6 2.5L18.6 2.5L19.6 3.3L20.6 3.6L21.6 3.7L22.6 3.9L23.6 4.1L23.6 4.7L22.6 4.9L21.6 5.1L20.6 5.2L19.6 5.5L18.6 6.3L17.6 6.3L16.6 6.4L15.6 6.6L14.6 6.1L13.6 6.1L12.6 6.2L11.6 6.4L10.6 6.6L9.6 6.4L8.6 6.9L7.6 7.0L6.6 7.2L5.6 6.8L4.6 6.6L3.6 6.7L2.6 7.0L1.6 6.8L0.6 6.9z" fill="#2e2428"/><path d="M0.6 9.6L1.6 10.3L2.6 9.9L3.6 9.9L4.6 10.0L5.6 10.4L6.6 10.2L7.6 10.5L8.6 9.9L9.6 10.0L10.6 10.4L11.6 10.6L12.6 10.2L13.6 10.5L14.6 10.4L15.6 10.5L16.6 10.8L17.6 11.0L18.6 10.9L19.6 11.3L20.6 11.9L21.6 12.2L22.6 12.1L23.6 12.3L23.6 12.9L22.6 13.1L21.6 13.0L20.6 13.3L19.6 13.9L18.6 14.3L17.6 14.2L16.6 14.4L15.6 14.7L14.6 14.8L13.6 14.7L12.6 15.0L11.6 14.6L10.6 14.8L9.6 15.2L8.6 15.3L7.6 14.7L6.6 15.0L5.6 14.8L4.6 15.2L3.6 15.3L2.6 15.3L1.6 14.9L0.6 15.6z" fill="#2e2428"/><path d="M24.3 2.1L25.3 1.6L26.3 1.9L27.3 1.8L28.3 1.9L29.3 2.0L30.3 1.6L31.3 2.3L32.3 2.1L33.3 2.4L34.3 2.1L35.3 2.4L36.3 2.5L37.3 2.2L38.3 2.6L39.3 2.5L40.3 2.3L41.3 3.0L42.3 3.1L43.3 3.3L44.3 3.2L45.3 3.7L46.3 4.1L47.3 4.1L47.3 4.7L46.3 4.7L45.3 5.1L44.3 5.6L43.3 5.5L42.3 5.7L41.3 5.8L40.3 6.5L39.3 6.3L38.3 6.2L37.3 6.6L36.3 6.3L35.3 6.4L34.3 6.7L33.3 6.4L32.3 6.7L31.3 6.5L30.3 7.2L29.3 6.8L28.3 6.9L27.3 7.0L26.3 6.9L25.3 7.2L24.3 6.7z" fill="#2e2428"/><path d="M24.3 10.2L25.3 10.0L26.3 10.3L27.3 9.8L28.3 9.7L29.3 9.7L30.3 10.0L31.3 9.8L32.3 10.7L33.3 10.5L34.3 10.0L35.3 10.2L36.3 10.6L37.3 10.3L38.3 10.6L39.3 10.5L40.3 11.0L41.3 11.1L42.3 11.0L43.3 11.6L44.3 11.7L45.3 11.6L46.3 12.3L47.3 12.3L47.3 12.9L46.3 12.9L45.3 13.6L44.3 13.5L43.3 13.6L42.3 14.2L41.3 14.1L40.3 14.2L39.3 14.7L38.3 14.6L37.3 14.9L36.3 14.6L35.3 15.0L34.3 15.2L33.3 14.7L32.3 14.5L31.3 15.4L30.3 15.2L29.3 15.5L28.3 15.5L27.3 15.4L26.3 14.9L25.3 15.2L24.3 15.0z" fill="#2e2428"/><path d="M48.0 2.1L49.0 2.0L50.0 1.5L51.0 1.9L52.0 2.0L53.0 2.2L54.0 1.6L55.0 2.1L56.0 2.3L57.0 2.5L58.0 2.6L59.0 2.5L60.0 2.2L61.0 2.7L62.0 2.8L63.0 2.6L64.0 2.8L65.0 2.3L66.0 3.1L67.0 3.0L68.0 3.2L69.0 3.9L70.0 3.7L71.0 4.1L71.0 4.7L70.0 5.1L69.0 4.9L68.0 5.6L67.0 5.8L66.0 5.7L65.0 6.5L64.0 6.0L63.0 6.2L62.0 6.0L61.0 6.1L60.0 6.6L59.0 6.3L58.0 6.2L57.0 6.3L56.0 6.5L55.0 6.7L54.0 7.2L53.0 6.6L52.0 6.8L51.0 6.9L50.0 7.3L49.0 6.8L48.0 6.7z" fill="#2e2428"/><path d="M48.0 10.1L49.0 10.0L50.0 10.3L51.0 10.1L52.0 10.3L53.0 9.8L54.0 9.9L55.0 10.2L56.0 10.7L57.0 10.5L58.0 10.6L59.0 10.7L60.0 10.8L61.0 10.3L62.0 11.0L63.0 11.1L64.0 10.5L65.0 10.9L66.0 10.6L67.0 11.3L68.0 11.3L69.0 11.9L70.0 12.1L71.0 12.3L71.0 12.9L70.0 13.1L69.0 13.3L68.0 13.9L67.0 13.9L66.0 14.6L65.0 14.3L64.0 14.7L63.0 14.1L62.0 14.2L61.0 14.9L60.0 14.4L59.0 14.5L58.0 14.6L57.0 14.7L56.0 14.5L55.0 15.0L54.0 15.3L53.0 15.4L52.0 14.9L51.0 15.1L50.0 14.9L49.0 15.2L48.0 15.1z" fill="#2e2428"/><path d="M71.7 1.7L72.7 2.1L73.7 2.0L74.7 1.5L75.7 1.5L76.7 1.6L77.7 2.1L78.7 1.9L79.7 1.8L80.7 2.0L81.7 2.0L82.7 2.2L83.7 2.2L84.7 2.3L85.7 2.7L86.7 2.2L87.7 2.3L88.7 3.0L89.7 2.4L90.7 2.7L91.7 3.3L92.7 4.1L93.7 3.8L94.7 4.1L94.7 4.7L93.7 5.0L92.7 4.7L91.7 5.5L90.7 6.1L89.7 6.4L88.7 5.8L87.7 6.5L86.7 6.6L85.7 6.1L84.7 6.5L83.7 6.6L82.7 6.6L81.7 6.8L80.7 6.8L79.7 7.0L78.7 6.9L77.7 6.7L76.7 7.2L75.7 7.3L74.7 7.3L73.7 6.8L72.7 6.7L71.7 7.1z" fill="#2e2428"/><path d="M71.7 9.5L72.7 9.8L73.7 10.3L74.7 10.3L75.7 9.9L76.7 10.0L77.7 10.0L78.7 9.9L79.7 10.5L80.7 10.7L81.7 10.1L82.7 10.9L83.7 10.2L84.7 10.9L85.7 10.4L86.7 10.5L87.7 10.5L88.7 10.9L89.7 10.7L90.7 11.5L91.7 11.5L92.7 12.1L93.7 12.0L94.7 12.3L94.7 12.9L93.7 13.2L92.7 13.1L91.7 13.7L90.7 13.7L89.7 14.5L88.7 14.3L87.7 14.7L86.7 14.7L85.7 14.8L84.7 14.3L83.7 15.0L82.7 14.3L81.7 15.1L80.7 14.5L79.7 14.7L78.7 15.3L77.7 15.2L76.7 15.2L75.7 15.3L74.7 14.9L73.7 14.9L72.7 15.4L71.7 15.7z" fill="#2e2428"/><path d="M95.4 1.7L96.4 1.7L97.4 2.1L98.4 2.2L99.4 1.8L100.4 1.9L101.4 1.7L102.4 1.9L103.4 2.4L104.4 2.2L105.4 2.0L106.4 2.3L107.4 2.7L108.4 2.1L109.4 2.2L110.4 2.9L111.4 2.6L112.4 2.8L113.4 2.5L114.4 3.2L115.4 3.7L116.4 3.8L117.4 3.7L118.4 4.1L118.4 4.7L117.4 5.1L116.4 5.0L115.4 5.1L114.4 5.6L113.4 6.3L112.4 6.0L111.4 6.2L110.4 5.9L109.4 6.6L108.4 6.7L107.4 6.1L106.4 6.5L105.4 6.8L104.4 6.6L103.4 6.4L102.4 6.9L101.4 7.1L100.4 6.9L99.4 7.0L98.4 6.6L97.4 6.7L96.4 7.1L95.4 7.1z" fill="#2e2428"/><path d="M95.4 10.2L96.4 9.8L97.4 9.7L98.4 10.0L99.4 10.1L100.4 9.8L101.4 9.9L102.4 10.6L103.4 10.0L104.4 10.6L105.4 10.6L106.4 10.2L107.4 10.6L108.4 10.4L109.4 10.9L110.4 10.5L111.4 11.1L112.4 11.2L113.4 11.0L114.4 11.4L115.4 11.6L116.4 11.7L117.4 12.1L118.4 12.3L118.4 12.9L117.4 13.1L116.4 13.5L115.4 13.6L114.4 13.8L113.4 14.2L112.4 14.0L111.4 14.1L110.4 14.7L109.4 14.3L108.4 14.8L107.4 14.6L106.4 15.0L105.4 14.6L104.4 14.6L103.4 15.2L102.4 14.6L101.4 15.3L100.4 15.4L99.4 15.1L98.4 15.2L97.4 15.5L96.4 15.4L95.4 15.0z" fill="#2e2428"/><path d="M119.1 1.9L120.1 1.7L121.1 1.8L122.1 1.6L123.1 1.9L124.1 2.2L125.1 2.2L126.1 1.7L127.1 2.2L128.1 1.9L129.1 1.8L130.1 2.2L131.1 2.2L132.1 2.3L133.1 2.6L134.1 2.2L135.1 2.7L136.1 2.4L137.1 2.9L138.1 2.8L139.1 3.2L140.1 3.7L141.1 4.1L142.1 4.1L142.1 4.7L141.1 4.7L140.1 5.1L139.1 5.6L138.1 6.0L137.1 5.9L136.1 6.4L135.1 6.1L134.1 6.6L133.1 6.2L132.1 6.5L131.1 6.6L130.1 6.6L129.1 7.0L128.1 6.9L127.1 6.6L126.1 7.1L125.1 6.6L124.1 6.6L123.1 6.9L122.1 7.2L121.1 7.0L120.1 7.1L119.1 6.9z" fill="#2e2428"/><path d="M119.1 9.7L120.1 10.0L121.1 9.8L122.1 10.3L123.1 10.4L124.1 10.4L125.1 9.9L126.1 10.5L127.1 10.0L128.1 10.4L129.1 10.3L130.1 10.6L131.1 10.4L132.1 10.9L133.1 10.8L134.1 10.4L135.1 11.1L136.1 10.8L137.1 11.1L138.1 11.4L139.1 12.0L140.1 12.3L141.1 12.0L142.1 12.3L142.1 12.9L141.1 13.2L140.1 12.9L139.1 13.2L138.1 13.8L137.1 14.1L136.1 14.4L135.1 14.1L134.1 14.8L133.1 14.4L132.1 14.3L131.1 14.8L130.1 14.6L129.1 14.9L128.1 14.8L127.1 15.2L126.1 14.7L125.1 15.3L124.1 14.8L123.1 14.8L122.1 14.9L121.1 15.4L120.1 15.2L119.1 15.5z" fill="#2e2428"/><path d="M142.8 1.5L143.8 1.5L144.8 1.4L145.8 2.1L146.8 1.8L147.8 1.9L148.8 1.9L149.8 1.7L150.8 1.9L151.8 1.8L152.8 2.5L153.8 2.1L154.8 2.2L155.8 2.2L156.8 2.4L157.8 2.3L158.8 2.8L159.8 2.4L160.8 2.9L161.8 3.0L162.8 3.1L163.8 3.6L164.8 4.1L165.8 4.1L165.8 4.7L164.8 4.7L163.8 5.2L162.8 5.7L161.8 5.8L160.8 5.9L159.8 6.4L158.8 6.0L157.8 6.5L156.8 6.4L155.8 6.6L154.8 6.6L153.8 6.7L152.8 6.3L151.8 7.0L150.8 6.9L149.8 7.1L148.8 6.9L147.8 6.9L146.8 7.0L145.8 6.7L144.8 7.4L143.8 7.3L142.8 7.3z" fill="#2e2428"/><path d="M142.8 10.0L143.8 9.8L144.8 9.6L145.8 9.7L146.8 10.1L147.8 10.2L148.8 9.9L149.8 10.4L150.8 10.3L151.8 10.7L152.8 10.7L153.8 10.4L154.8 10.4L155.8 10.5L156.8 10.8L157.8 10.4L158.8 10.7L159.8 11.2L160.8 11.3L161.8 10.9L162.8 11.3L163.8 11.7L164.8 12.2L165.8 12.3L165.8 12.9L164.8 13.0L163.8 13.5L162.8 13.9L161.8 14.3L160.8 13.9L159.8 14.0L158.8 14.5L157.8 14.8L156.8 14.4L155.8 14.7L154.8 14.8L153.8 14.8L152.8 14.5L151.8 14.5L150.8 14.9L149.8 14.8L148.8 15.3L147.8 15.0L146.8 15.1L145.8 15.5L144.8 15.6L143.8 15.4L142.8 15.2z" fill="#2e2428"/></svg></body></html>
